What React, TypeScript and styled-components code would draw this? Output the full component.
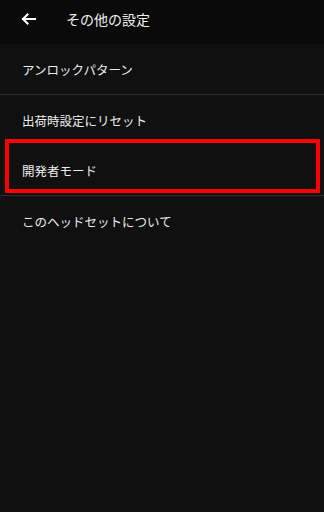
import styled, { createGlobalStyle } from "styled-components"

const GlobalStyle = createGlobalStyle`
    html, body {
        margin: 0;
        padding: 0;
        background: #101010;
    }
    body {
        font-family: "Noto Sans CJK JP", "Noto Sans", sans-serif;
        color: #ececec;
    }
`;

const Screen = styled.div`
    width: 324px;
    height: 512px;
    display: flex;
    flex-direction: column;
    background-color: #101010;
    overflow: hidden;
`;

const Header = styled.div`
    height: 44px;
    flex-shrink: 0;
    display: flex;
    align-items: center;
    background-color: #0a0a0a;
`;

const BackButton = styled.div`
    width: 66px;
    display: flex;
    align-items: center;
    padding-left: 21px;
    box-sizing: border-box;
    margin-top: -6px;
`;

const Title = styled.div`
    font-size: 14px;
    line-height: 1;
    margin-top: -7px;
    letter-spacing: 0;
    color: #f0f0f0;
`;

const Row = styled.div<{ $divider?: boolean }>`
    position: relative;
    height: 50px;
    display: flex;
    align-items: center;
    padding-left: 22px;
    font-size: 12.5px;
    color: #ececec;
    border-bottom: ${p => p.$divider ? "1px solid #2c2c2c" : "none"};
`;

const Highlight = styled.div`
    position: absolute;
    top: -6px;
    left: 5px;
    right: 4px;
    bottom: 2px;
    border: 4px solid #ff0000;
    pointer-events: none;
`;

const items = [
    { label: "アンロックパターン", divider: true },
    { label: "出荷時設定にリセット" },
    { label: "開発者モード", divider: true, marked: true },
    { label: "このヘッドセットについて" },
];

export default function App() {
    return (
        <Screen>
            <GlobalStyle />
            <Header>
                <BackButton>
                    <svg width="15" height="12" viewBox="0 0 15 12" fill="none">
                        <path d="M14 6H2M6.5 1.5L2 6l4.5 4.5" stroke="#fff" strokeWidth="2" strokeLinecap="square" />
                    </svg>
                </BackButton>
                <Title>その他の設定</Title>
            </Header>
            {items.map(item =>
                <Row key={item.label} $divider={item.divider}>
                    {item.label}
                    {item.marked && <Highlight />}
                </Row>
            )}
        </Screen>
    )
}
